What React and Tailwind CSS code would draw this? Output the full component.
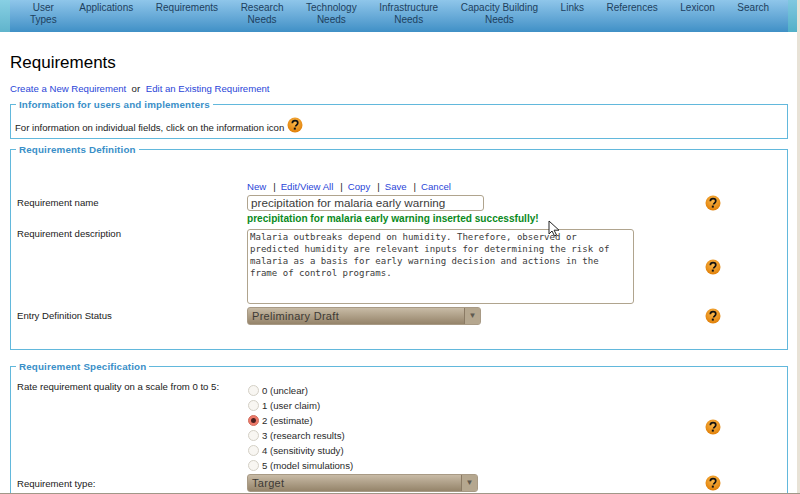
const Help = ({ className = "" }) => (
  <svg width="16" height="16" viewBox="0 0 16 16" className={className}>
    <defs>
      <radialGradient id="hg" cx="50%" cy="35%" r="65%">
        <stop offset="0%" stopColor="#fbb84a" />
        <stop offset="100%" stopColor="#e07f08" />
      </radialGradient>
    </defs>
    <circle cx="8" cy="8" r="7.5" fill="url(#hg)" />
    <path d="M5.3 6.2C5.4 4.6 6.5 3.7 8 3.7c1.6 0 2.8 1 2.8 2.3 0 1.2-.7 1.7-1.4 2.2-.6.4-.8.7-.8 1.4" fill="none" stroke="#111" strokeWidth="1.7" />
    <rect x="6.8" y="10.6" width="2" height="2" fill="#111" />
  </svg>
);

const Select = ({ value, width }) => (
  <div className={`flex h-[18px] items-center rounded-[3px] border border-[#a89a85] bg-gradient-to-b from-[#c8bba6] to-[#95846a] ${width}`}>
    <span className="flex-1 pl-[4px] text-[11px] leading-none text-[#3d3a35] tracking-[0.3px]">{value}</span>
    <span className="flex h-full w-[16px] items-center justify-center border-l border-[#8a7a64] bg-[#b5a78f] text-[8px] text-[#5f5a50]">▼</span>
  </div>
);

const Radio = ({ label, checked }) => (
  <div className="flex h-[15px] items-center gap-[3px]">
    <span className={`ml-px flex h-[11px] w-[11px] items-center justify-center rounded-full border ${checked ? "border-[#d07060] bg-[#f07a6a]" : "border-[#d4d0c6] bg-[#f8f6f2]"}`}>
      {checked && <span className="h-[5px] w-[5px] rounded-full bg-[#4a2020]" />}
    </span>
    <span>{label}</span>
  </div>
);

const nav = [
  ["User", "Types"],
  ["Applications", ""],
  ["Requirements", ""],
  ["Research", "Needs"],
  ["Technology", "Needs"],
  ["Infrastructure", "Needs"],
  ["Capacity Building", "Needs"],
  ["Links", ""],
  ["References", ""],
  ["Lexicon", ""],
  ["Search", ""],
];

const Legend = ({ children, className = "" }) => (
  <legend className={`px-[3px] text-[9.8px] leading-[13px] font-bold tracking-[0.15px] text-[#3a8fc8] ${className}`}>{children}</legend>
);

const A = ({ children }) => <a className="text-[#2a45d8]">{children}</a>;

export default function App() {
  return (
    <div className="relative h-[494px] w-[800px] overflow-hidden bg-white font-['Liberation_Sans',Arial,sans-serif] text-[9.6px] leading-[12px] text-[#1a1a1a]">
      <div className="flex h-[32px] w-[797px] bg-gradient-to-b from-[#8fc6ea] to-[#3f90c6]">
        <div className="w-[10px] bg-gradient-to-b from-[#88d0e4] to-[#60b4cc]" />
        <nav className="flex w-[778px] pl-[8.7px] pt-[2px] text-[10px] leading-[12px] text-[#1d3f5e]">
          {nav.map(([a, b]) => (
            <div key={a} className="shrink-0 px-[11.3px] text-center">
              <div>{a}</div>
              {b && <div>{b}</div>}
            </div>
          ))}
        </nav>
        <div className="w-[9px] bg-gradient-to-b from-[#80c8e0] to-[#50b0c8]" />
      </div>
      <div className="absolute right-0 top-0 h-full w-[3px] bg-[#e8e2d6]" />
      <div className="absolute bottom-0 left-0 h-px w-full bg-[#a09888]" />

      <main className="ml-[10px] w-[778px]">
        <h1 className="mt-[21px] h-[19px] text-[17px] leading-[19px] font-normal text-black">Requirements</h1>
        <p className="mt-[11px] h-[12px]">
          <A>Create a New Requirement</A>&nbsp; or <span className="ml-[3px]"><A>Edit an Existing Requirement</A></span>
        </p>

        <fieldset className="mt-[3px] h-[41px] border border-[#62b8dc] pl-[4px]">
          <Legend className="ml-[1px]">Information for users and implementers</Legend>
          <div className="mt-[6px] flex items-start gap-[3px]">
            <span className="mt-[5px]">For information on individual fields, click on the information icon</span>
            <Help />
          </div>
        </fieldset>

        <fieldset className="mt-[4px] h-[207px] border border-[#62b8dc] pl-[6px]">
          <Legend className="-ml-[1px]">Requirements Definition</Legend>
          <div className="relative">
            <div className="ml-[230px] mt-[25px] flex h-[14px] items-start">
              <A>New</A>
              <span className="ml-[7px]">|</span>
              <span className="ml-[5px]"><A>Edit/View All</A></span>
              <span className="ml-[7px]">|</span>
              <span className="ml-[5px]"><A>Copy</A></span>
              <span className="ml-[7px]">|</span>
              <span className="ml-[5px]"><A>Save</A></span>
              <span className="ml-[7px]">|</span>
              <span className="ml-[5px]"><A>Cancel</A></span>
            </div>
            <div className="grid grid-cols-[230px_458px_16px]">
              <div className="pt-[2px]">Requirement name</div>
              <div className="h-[16px] w-[237px] rounded-[3px] border border-[#b0a48e] bg-white px-[3px] text-[11.7px] leading-[14px] text-[#3b3b3b]">precipitation for malaria early warning</div>
              <Help />
              <div />
              <div className="col-span-2 h-[18px] pt-[2px] text-[10.1px] font-bold text-[#0a8a1c]">precipitation for malaria early warning inserted successfully!</div>
              <div className="leading-[10px]">Requirement description</div>
              <div className="h-[75px] w-[387px] rounded-[3px] border border-[#b0a48e] bg-white px-[2px] pt-[1px] font-['DejaVu_Sans_Mono',monospace] text-[9.05px] leading-[12px] text-[#3b3b3b]">
                Malaria outbreaks depend on humidity. Therefore, observed or predicted humidity are relevant inputs for determining the risk of malaria as a basis for early warning decision and actions in the frame of control programs.
              </div>
              <Help className="mt-[30px]" />
              <div className="pt-[6px]">Entry Definition Status</div>
              <div className="mt-[3px]"><Select value="Preliminary Draft" width="w-[234px]" /></div>
              <Help className="mt-[4px]" />
            </div>
          </div>
        </fieldset>

        <fieldset className="mt-[10px] h-[150px] border border-[#62b8dc] pl-[6px]">
          <Legend className="-ml-[1px]">Requirement Specification</Legend>
          <div className="grid grid-cols-[230px_458px_16px]">
            <div className="pt-[8px]">Rate requirement quality on a scale from 0 to 5:</div>
            <div className="pt-[10px] text-[#2a2a2a]">
              <Radio label="0 (unclear)" />
              <Radio label="1 (user claim)" />
              <Radio label="2 (estimate)" checked />
              <Radio label="3 (research results)" />
              <Radio label="4 (sensitivity study)" />
              <Radio label="5 (model simulations)" />
            </div>
            <Help className="mt-[46px]" />
            <div className="pt-[5px]">Requirement type:</div>
            <div className="pt-[1px]"><Select value="Target" width="w-[231px]" /></div>
            <Help className="mt-[2px]" />
          </div>
        </fieldset>
      </main>

      <svg className="absolute left-[548px] top-[220px] z-10" width="12" height="17" viewBox="0 0 12 17">
        <path d="M1 1v13l3-3 2.5 5 2-1-2.4-4.8H11z" fill="#fff" stroke="#222" strokeWidth="1" />
      </svg>
    </div>
  );
}
